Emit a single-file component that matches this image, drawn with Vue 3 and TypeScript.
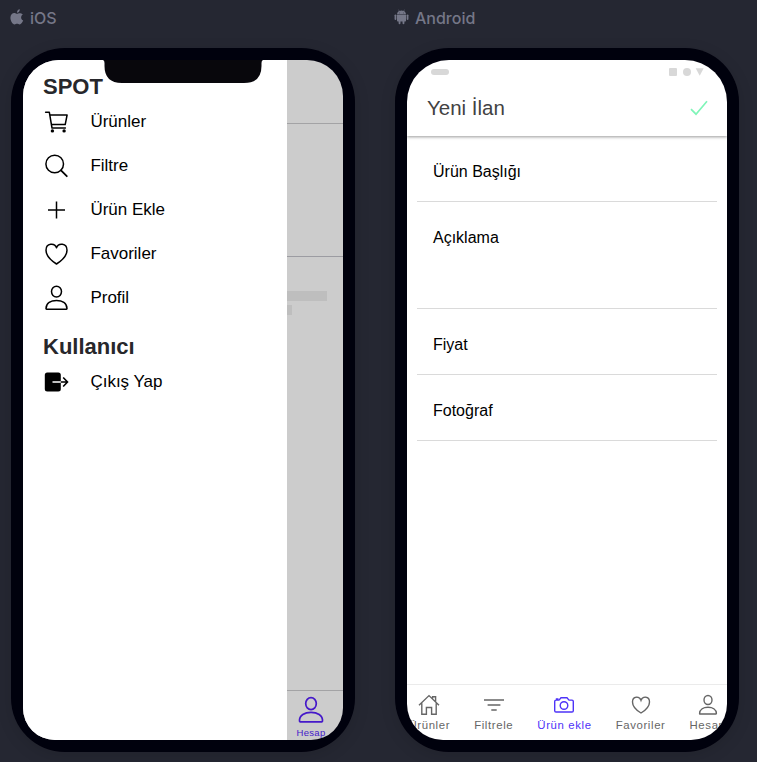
<script setup lang="ts">
interface Item {
  icon: string
  label: string
}

const mainItems: Item[] = [
  { icon: 'cart', label: 'Ürünler' },
  { icon: 'search', label: 'Filtre' },
  { icon: 'add', label: 'Ürün Ekle' },
  { icon: 'heart', label: 'Favoriler' },
  { icon: 'person', label: 'Profil' },
]

const fields = [
  { label: 'Ürün Başlığı', kind: 'first' },
  { label: 'Açıklama', kind: 'area' },
  { label: 'Fiyat', kind: '' },
  { label: 'Fotoğraf', kind: '' },
]
</script>

<template>
  <div class="stage">
    <section class="device">
      <div class="platform">
        <svg class="platform-icon" viewBox="0 0 14 16" width="14" height="16">
          <path d="M9.8 0.2C8.3.3 6.8 1.8 7 3.8 8.6 3.8 9.9 2.1 9.8.2ZM12.9 5.6C11.5 4 9.4 3.9 8.3 4.4 7.1 4.9 7 4.9 5.8 4.4 3.2 3.3.4 5.3.4 8.7.4 11.8 2.6 15.4 4.5 15.4 5.5 15.4 6 14.8 7.1 14.8 8.2 14.8 8.6 15.4 9.6 15.4 11.2 15.4 12.5 13.2 13.2 11.6 10.6 10.4 10.5 7 12.9 5.6Z" fill="currentColor" />
        </svg>
        <span>iOS</span>
      </div>
      <div class="phone">
        <div class="screen">
          <div class="page">
            <div class="page-bar"></div>
            <div class="page-hero"></div>
            <div class="page-body">
              <div class="skeleton wide"></div>
              <div class="skeleton short"></div>
            </div>
            <div class="page-tabs">
              <svg viewBox="0 0 28 28" width="28" height="28" fill="none" stroke="currentColor" stroke-width="1.7">
                <ellipse cx="14" cy="7.6" rx="5.3" ry="6" />
                <path d="M2.5 25.2C2 19 8 16.3 14 16.3S26 19 25.5 25.2Q25.4 25.8 24.8 25.8H3.2Q2.6 25.8 2.5 25.2Z" />
              </svg>
              <span>Hesap</span>
            </div>
          </div>
          <nav class="menu">
            <h2>SPOT</h2>
            <div v-for="item in mainItems" :key="item.label" class="menu-item">
              <svg viewBox="0 0 28 28" width="28" height="28" fill="none" stroke="#000" stroke-width="1.5" stroke-linecap="round" stroke-linejoin="round">
                <template v-if="item.icon === 'cart'">
                  <path d="M3.6 4.2H7.3L10 20H23.4M7.9 7H25.1L23.2 16.6H9.4" />
                  <circle cx="10.4" cy="22.9" r="1.7" fill="#000" stroke="none" />
                  <circle cx="22.1" cy="22.9" r="1.7" fill="#000" stroke="none" />
                </template>
                <template v-else-if="item.icon === 'search'">
                  <circle cx="12.7" cy="12" r="8.8" />
                  <path d="M19 18.3L24.8 24.2" stroke-width="1.8" />
                </template>
                <path v-else-if="item.icon === 'add'" d="M14.5 5.5V22.5M6 14H23" stroke-linecap="butt" />
                <path v-else-if="item.icon === 'heart'" d="M14.5 7.7C12.8 2.8 4 2.6 4 10.2C4 15.5 9 20.5 14.5 24C20 20.5 25 15.5 25 10.2C25 2.6 16.2 2.8 14.5 7.7Z" />
                <template v-else>
                  <ellipse cx="14.5" cy="7.6" rx="5" ry="5.4" />
                  <path d="M4 24.8C4 19 9 16.5 14.5 16.5S25 19 25 24.8Q25 25.2 24.4 25.2H4.6Q4 25.2 4 24.8Z" />
                </template>
              </svg>
              <span>{{ item.label }}</span>
            </div>
            <h2>Kullanıcı</h2>
            <div class="menu-item">
              <svg viewBox="0 0 28 28" width="28" height="28" fill="none">
                <rect x="2.8" y="4.5" width="16" height="19" rx="2.5" fill="#000" />
                <path d="M10.5 14H19" stroke="#fff" stroke-width="1.5" />
                <path d="M18.8 14H25M21.2 9.5L25.5 14L21.2 18.5" stroke="#000" stroke-width="1.6" />
              </svg>
              <span>Çıkış Yap</span>
            </div>
          </nav>
          <svg class="notch" viewBox="0 0 160 23" width="160" height="23">
            <path d="M0 0H160Q158.5 .5 158.5 3V6Q158.5 23 141 23H19Q1.5 23 1.5 6V3Q1.5 .5 0 0Z" fill="#08070c" />
          </svg>
        </div>
      </div>
    </section>

    <section class="device">
      <div class="platform android-label">
        <svg class="platform-icon" viewBox="0 0 16 16" width="15" height="16" fill="currentColor">
          <path d="M3.2 5.2C3.3 3.4 4.3 2.3 5.4 1.7L4.6.3 5 .1 5.9 1.5Q8 .7 10.1 1.5L11 .1 11.4.3 10.6 1.7C11.7 2.3 12.7 3.4 12.8 5.2ZM3.2 5.8H12.8V12Q12.8 12.8 12 12.8H11.1V14.7Q11 15.6 10.1 15.6T9.1 14.7V12.8H6.9V14.7Q6.8 15.6 5.9 15.6T4.9 14.7V12.8H4Q3.2 12.8 3.2 12Z" />
          <rect x=".6" y="5.2" width="1.9" height="6" rx=".95" />
          <rect x="13.5" y="5.2" width="1.9" height="6" rx=".95" />
          <circle cx="5.9" cy="3.6" r=".45" fill="#252732" />
          <circle cx="10.1" cy="3.6" r=".45" fill="#252732" />
        </svg>
        <span>Android</span>
      </div>
      <div class="phone">
        <div class="screen form-screen">
          <header class="toolbar">
            <div class="status">
              <i class="pill"></i>
              <svg viewBox="0 0 36 8" width="36" height="8" fill="#d8d8d8">
                <rect width="8" height="8" rx="1" />
                <circle cx="18" cy="4" r="4" />
                <path d="M26.7 .3H34.7L30.7 7.8Z" />
              </svg>
            </div>
            <div class="title-row">
              <h1>Yeni İlan</h1>
              <svg viewBox="0 0 18 16" width="18" height="16" fill="none">
                <path d="M1 9.2L6 14.2L17 1.2" stroke="#7ff5b8" stroke-width="1.7" />
              </svg>
            </div>
          </header>
          <main class="form">
            <div v-for="field in fields" :key="field.label" class="field" :class="field.kind">{{ field.label }}</div>
          </main>
          <footer class="tabs">
            <div class="tab">
              <svg viewBox="0 0 22 22" width="22" height="22">
                <path d="M1 11.2L11 1.6L21 11.2M3.8 9.2V20.2H8.4V13.5H13.6V20.2H18.2V9.2M14.6 4.6V2.7H17.6V7.6" />
              </svg>
              <span>Ürünler</span>
            </div>
            <div class="tab">
              <svg viewBox="0 0 22 22" width="22" height="22">
                <path d="M1 6H21M4.6 11H17.4M8.3 16H13.7" />
              </svg>
              <span>Filtrele</span>
            </div>
            <div class="tab active">
              <svg viewBox="0 0 22 22" width="22" height="22">
                <path d="M3 6.1H6L8 3.8H14L16 6.1H19Q20.3 6.1 20.3 7.4V16.7Q20.3 18 19 18H3Q1.7 18 1.7 16.7V7.4Q1.7 6.1 3 6.1ZM3.5 6V5H5.5" />
                <circle cx="11" cy="11.5" r="3.8" />
              </svg>
              <span>Ürün ekle</span>
            </div>
            <div class="tab">
              <svg viewBox="0 0 22 22" width="22" height="22">
                <path d="M11 6.3C9.6 2 2.5 1.8 2.5 7.9C2.5 12.1 6.5 16.2 11 19C15.5 16.2 19.5 12.1 19.5 7.9C19.5 1.8 12.4 2 11 6.3Z" />
              </svg>
              <span>Favoriler</span>
            </div>
            <div class="tab">
              <svg viewBox="0 0 22 22" width="22" height="22">
                <ellipse cx="11" cy="6" rx="4" ry="4.5" />
                <path d="M2.6 19.6C2.6 15.2 6.6 13.2 11 13.2S19.4 15.2 19.4 19.6Q19.4 20 19 20H3Q2.6 20 2.6 19.6Z" />
              </svg>
              <span>Hesap</span>
            </div>
          </footer>
        </div>
      </div>
    </section>
  </div>
</template>

<style>
body {
  background: #252732;
}
</style>

<style scoped>
* {
  box-sizing: border-box;
}
.stage {
  display: flex;
  gap: 40px;
  width: 757px;
  height: 762px;
  padding: 0 0 0 11px;
  overflow: hidden;
  background: #252732;
  font-family: 'Liberation Sans', Arial, sans-serif;
}
.device {
  width: 344px;
  flex: none;
}
.platform {
  display: flex;
  align-items: center;
  gap: 6px;
  height: 48px;
  margin-left: -1px;
  padding-bottom: 12px;
  color: #757788;
  font: 500 16px/20px Inter, sans-serif;
}
.platform-icon {
  margin-top: -3px;
}
.phone {
  width: 344px;
  height: 704px;
  padding: 12px;
  border-radius: 54px;
  background: #00010d;
  box-shadow: 0 4px 16px rgba(0, 0, 0, 0.12);
}
.screen {
  position: relative;
  width: 320px;
  height: 680px;
  overflow: hidden;
  border-radius: 36px 36px 32px 32px;
  background: #fff;
}
.page {
  display: flex;
  flex-direction: column;
  height: 100%;
  background: #ccc;
}
.page-bar {
  height: 64px;
  border-bottom: 1px solid #a3a3a5;
}
.page-hero {
  height: 133px;
  border-bottom: 1px solid #9c9ca2;
}
.page-body {
  flex: 1;
  padding: 34px 16px 0 200px;
}
.skeleton {
  height: 10px;
  margin-bottom: 4px;
  background: #bebebe;
}
.short {
  width: 69px;
}
.page-tabs {
  display: flex;
  flex-direction: column;
  align-items: center;
  width: 100%;
  height: 50px;
  padding: 5px 0 0 256px;
  border-top: 1px solid #a3a3a5;
  color: #4519c9;
  font-size: 9.5px;
  line-height: 12px;
  letter-spacing: 0.3px;
}
.page-tabs span {
  margin-top: 3px;
}
.menu {
  position: absolute;
  inset: 0 auto 0 0;
  width: 264px;
  background: #fff;
}
.menu h2 {
  height: 40px;
  margin: 0;
  padding: 13px 20px 0;
  color: #27272b;
  font-size: 22px;
  font-weight: 700;
  line-height: 27px;
}
.menu-item {
  display: flex;
  align-items: center;
  gap: 20.4px;
  height: 44px;
  padding-left: 19px;
  color: #000;
  font-size: 17px;
  line-height: 20px;
}
.notch {
  position: absolute;
  top: 0;
  left: 80px;
}
.form-screen {
  display: flex;
  flex-direction: column;
  border-radius: 42px 42px 36px 36px;
}
.toolbar {
  height: 76px;
  box-shadow: 0 1px 3px rgba(0, 0, 0, 0.4);
}
.status {
  display: flex;
  align-items: center;
  justify-content: space-between;
  height: 24px;
  padding: 0 22px 0 23.5px;
}
.pill {
  width: 18.5px;
  height: 6.5px;
  border-radius: 3.25px;
  background: #d8d8d8;
}
.title-row {
  display: flex;
  align-items: center;
  justify-content: space-between;
  height: 48px;
  padding: 0 19px 0 20px;
}
h1 {
  margin: 0;
  color: #424242;
  font-size: 20.5px;
  font-weight: 400;
  line-height: 24px;
}
.form {
  flex: 1;
  padding: 0 10px;
}
.field {
  height: 66px;
  padding: 26px 16px 0;
  border-bottom: 1px solid #dadada;
  color: #000;
  font-size: 16px;
  line-height: 20px;
}
.area {
  height: 107px;
}
.tabs {
  display: flex;
  justify-content: center;
  height: 56px;
  margin: 0 -20px;
  border-top: 1px solid #ebebeb;
  color: #666;
}
.tab {
  display: flex;
  flex: none;
  flex-direction: column;
  align-items: center;
  padding: 9px 12px 0;
  font-size: 11.4px;
  line-height: 14px;
  letter-spacing: 0.62px;
}
.tab svg {
  fill: none;
  stroke: currentColor;
  stroke-width: 1.4;
}
.tab span {
  margin-top: 2px;
}
.active {
  color: #4e33f8;
}
</style>
